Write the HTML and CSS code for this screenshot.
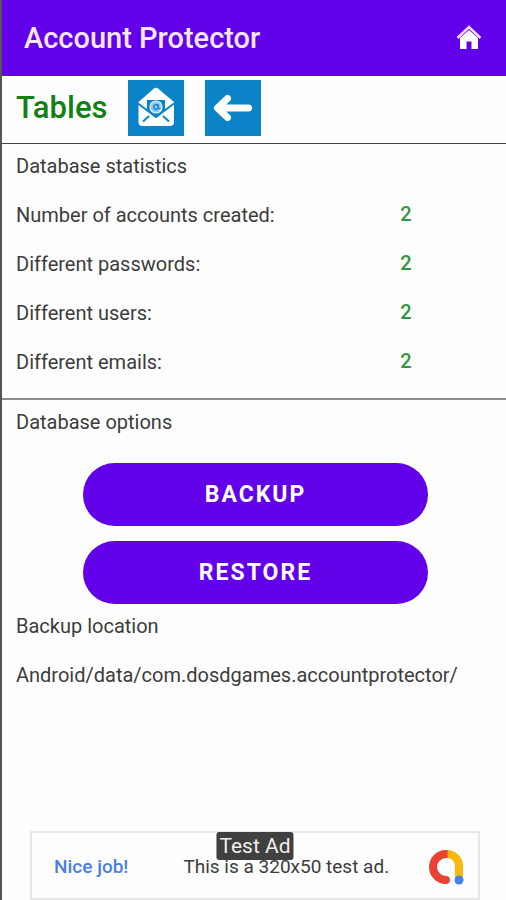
FILE: index.html
```html
<!DOCTYPE html>
<html lang="en">
<head>
<meta charset="utf-8">
<meta name="viewport" content="width=device-width, initial-scale=1">
<title>Account Protector</title>
<link rel="stylesheet" href="styles.css">
</head>
<body>
<div class="app">
  <header class="app-bar">
    <h1 class="app-title">Account Protector</h1>
    <a class="home" href="#" aria-label="Home">
      <svg viewBox="0 0 26 26" width="26" height="26" aria-hidden="true">
        <path d="M4 13 13 5l9 8v11h-6.500v-7.500h-5V24H4z" fill="#fff"/>
        <path d="M1.500 13 13 2l11.500 11" fill="none" stroke="#f3d9ff" stroke-width="2.500"/>
      </svg>
    </a>
  </header>

  <nav class="toolbar">
    <h2 class="page-title">Tables</h2>
    <button class="tile" type="button" aria-label="Email">
      <svg viewBox="0 0 56 56" width="56" height="56" aria-hidden="true">
        <path d="M10.500 22 26 8.500q2-1.500 4 0L46 22v20q0 4-4 4H14.500q-4 0-4-4z" fill="#fff"/>
        <path d="M19 20h18v10l-9 7-9-7z" fill="#0a83c9"/>
        <path d="M10 23.500 28 37l18-13.500M15 41.500l6-5.500M41 41.500 35 36" fill="none" stroke="#0a83c9" stroke-width="2"/>
        <circle cx="28" cy="27" r="6" fill="#8fc8e8" stroke="#e6f4fb" stroke-width="1.200"/>
        <circle cx="28" cy="27" r="2.300" fill="none" stroke="#0a83c9" stroke-width="1.200"/>
        <path d="M30.300 24.500v3.200q.4 1.800 2 .8" fill="none" stroke="#0a83c9"/>
      </svg>
    </button>
    <button class="tile" type="button" aria-label="Back">
      <svg viewBox="0 0 56 56" width="56" height="56" aria-hidden="true">
        <path d="M43.500 28H14M22.500 18.500 12.500 28l10 9.500" fill="none" stroke="#fff" stroke-width="7" stroke-linecap="round" stroke-linejoin="round"/>
      </svg>
    </button>
  </nav>

  <main>
    <section class="stats">
      <h3 class="line" id="stats-title">Database statistics</h3>
      <table class="stat-table" aria-labelledby="stats-title">
        <tbody>
          <tr><th scope="row">Number of accounts created:</th><td>2</td></tr>
          <tr><th scope="row">Different passwords:</th><td>2</td></tr>
          <tr><th scope="row">Different users:</th><td>2</td></tr>
          <tr><th scope="row">Different emails:</th><td>2</td></tr>
        </tbody>
      </table>
    </section>

    <section class="options">
      <h3 class="line">Database options</h3>
      <div class="actions">
        <button class="pill" type="button">BACKUP</button>
        <button class="pill" type="button">RESTORE</button>
      </div>
      <h3 class="line">Backup location</h3>
      <p class="line path">Android/data/com.dosdgames.accountprotector/</p>
    </section>
  </main>

  <aside class="ad">
    <span class="ad-tag">Test Ad</span>
    <a class="ad-lead" href="#">Nice job!</a>
    <span class="ad-text">This is a 320x50 test ad.</span>
    <svg class="ad-logo" viewBox="0 0 36 36" width="36" height="36" aria-hidden="true">
      <g fill="none" stroke-width="8">
        <path d="M19 5a12 12 0 0 1 12 12v13" stroke="#fbb80a"/>
        <path d="M19.500 5h-1.500a13 13 0 0 0 0 26" stroke="#e94235"/>
        <circle cx="18" cy="31" r="2" stroke="#e94235" stroke-width="4"/>
      </g>
      <circle cx="31" cy="31" r="4.500" fill="#4280ee"/>
    </svg>
  </aside>
</div>
</body>
</html>
```
FILE: styles.css
```css
* {
  box-sizing: border-box;
}

body {
  margin: 0;
  background: #fefefe;
  color: #3c3c3c;
  font-family: Roboto, "Liberation Sans", sans-serif;
  font-size: 20px;
}

h1,
h2,
h3,
p {
  margin: 0;
  font-weight: 400;
}

.app {
  display: flex;
  flex-direction: column;
  min-height: 100vh;
  border-left: 2px solid #555;
}

.app-bar {
  display: flex;
  align-items: center;
  justify-content: space-between;
  height: 76px;
  padding: 0 24px 0 22px;
  background: #6200ea;
}

.app-title {
  color: #f6e6ff;
  font-size: 29px;
  font-weight: 500;
}

.home,
.home svg,
.tile svg {
  display: block;
}

.toolbar {
  display: flex;
  align-items: center;
  height: 68px;
  padding: 0 14px 4px;
  gap: 21px;
  border-bottom: 1px solid #444;
}

.page-title {
  color: #128012;
  font-size: 31px;
  font-weight: 500;
}

.tile {
  padding: 0;
  border: 0;
  background: #0a83c9;
}

.stats {
  border-bottom: 2px solid #8c8c8c;
}

.line {
  padding: 0 14px;
  font-size: 20px;
  line-height: 44px;
}

.path {
  margin-top: 5px;
}

.stat-table {
  width: 100%;
  margin: 2px 0 12px;
  border-collapse: collapse;
}

.stat-table th,
.stat-table td {
  height: 49px;
  padding: 0;
  text-align: left;
}

.stat-table th {
  width: 79%;
  padding-left: 14px;
  font-weight: 400;
}

.stat-table td {
  padding-bottom: 2px;
  color: #349443;
  font-weight: 500;
}

.actions {
  display: flex;
  flex-direction: column;
  gap: 15px;
  margin: 19px 78px 0 81px;
}

.pill {
  height: 63px;
  padding: 0;
  border: 0;
  border-radius: 32px;
  background: #6200ea;
  color: #fff;
  font: 700 23px Roboto, sans-serif;
  letter-spacing: 2px;
}

.ad {
  position: relative;
  display: flex;
  align-items: center;
  height: 69px;
  margin: auto 26px 0 28px;
  padding: 2px 14px 0 22px;
  border: 2px solid #e6e8e8;
  font-size: 19px;
}

.ad-lead {
  color: #4b80e2;
  font-weight: 500;
  text-decoration: none;
}

.ad-text {
  margin-left: 55px;
}

.ad-logo {
  margin-left: auto;
}

.ad-tag {
  position: absolute;
  top: -1px;
  left: 50%;
  padding: 0 3px;
  border-radius: 3px;
  background: #404040;
  color: #eee;
  font-size: 21px;
  line-height: 28px;
  transform: translateX(-50%);
}
```
